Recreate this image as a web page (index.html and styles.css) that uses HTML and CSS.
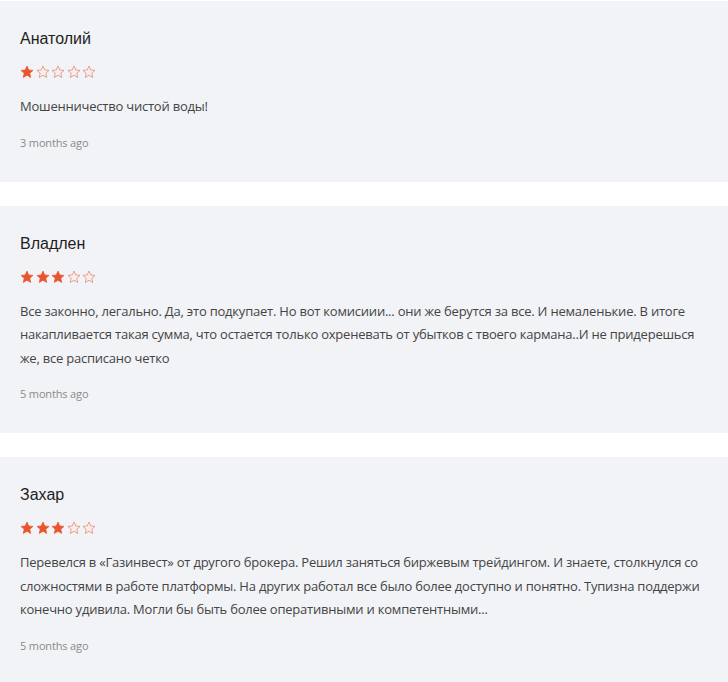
FILE: index.html
```html
<!DOCTYPE html>
<html lang="ru">
<head>
<meta charset="utf-8">
<link rel="stylesheet" href="styles.css">
</head>
<body>
<svg width="0" height="0" class="defs">
  <defs>
    <symbol id="star" viewBox="0 0 24 24">
      <path d="M12 1.8l3 6.7 7.3.75-5.5 4.9 1.6 7.2L12 17.65l-6.4 3.7 1.6-7.2-5.5-4.9 7.3-.75z"/>
    </symbol>
  </defs>
</svg>
<div class="reviews">
  <section class="review">
    <h3 class="name">Анатолий</h3>
    <div class="stars">
      <svg class="star on"><use href="#star"/></svg><svg class="star"><use href="#star"/></svg><svg class="star"><use href="#star"/></svg><svg class="star"><use href="#star"/></svg><svg class="star"><use href="#star"/></svg>
    </div>
    <p class="text">Мошенничество чистой воды!</p>
    <div class="date">3 months ago</div>
  </section>
  <section class="review">
    <h3 class="name">Владлен</h3>
    <div class="stars">
      <svg class="star on"><use href="#star"/></svg><svg class="star on"><use href="#star"/></svg><svg class="star on"><use href="#star"/></svg><svg class="star"><use href="#star"/></svg><svg class="star"><use href="#star"/></svg>
    </div>
    <p class="text">Все законно, легально. Да, это подкупает. Но вот комисиии... они же берутся за все. И немаленькие. В итоге накапливается такая сумма, что остается только охреневать от убытков с твоего кармана..И не придерешься же, все расписано четко</p>
    <div class="date">5 months ago</div>
  </section>
  <section class="review">
    <h3 class="name">Захар</h3>
    <div class="stars">
      <svg class="star on"><use href="#star"/></svg><svg class="star on"><use href="#star"/></svg><svg class="star on"><use href="#star"/></svg><svg class="star"><use href="#star"/></svg><svg class="star"><use href="#star"/></svg>
    </div>
    <p class="text">Перевелся в «Газинвест» от другого брокера. Решил заняться биржевым трейдингом. И знаете, столкнулся со сложностями в работе платформы. На других работал все было более доступно и понятно. Тупизна поддержи конечно удивила. Могли бы быть более оперативными и компетентными...</p>
    <div class="date">5 months ago</div>
  </section>
</div>
</body>
</html>
```
FILE: styles.css
```css
html, body {
  margin: 0;
  padding: 0;
  background: #ffffff;
}
.defs {
  position: absolute;
  width: 0;
  height: 0;
}
.reviews {
  display: flex;
  flex-direction: column;
  gap: 24px;
  padding-top: 1px;
}
.review {
  background: #f2f3f7;
  padding: 28px 20px 31px;
}
.name {
  margin: 0;
  font-family: "Liberation Sans", Arial, sans-serif;
  font-weight: normal;
  font-size: 16px;
  line-height: 20px;
  color: #1e1e1e;
}
.stars {
  display: flex;
  gap: 1.5px;
  margin-top: 15px;
  height: 16px;
  align-items: center;
}
.star {
  width: 14px;
  height: 14px;
  fill: #fbeeea;
  stroke: #d9826b;
  stroke-width: 1.2;
}
.star.on {
  fill: #e9552c;
  stroke: #e9552c;
}
.text {
  margin: 15px 0 0;
  font-family: "Open Sans", sans-serif;
  font-size: 13px;
  line-height: 23.5px;
  color: #444444;
  letter-spacing: -0.22px;
}
.date {
  margin-top: 16px;
  font-family: "Open Sans", sans-serif;
  font-size: 11px;
  line-height: 16px;
  color: #8a8a8a;
  letter-spacing: -0.15px;
}
```
